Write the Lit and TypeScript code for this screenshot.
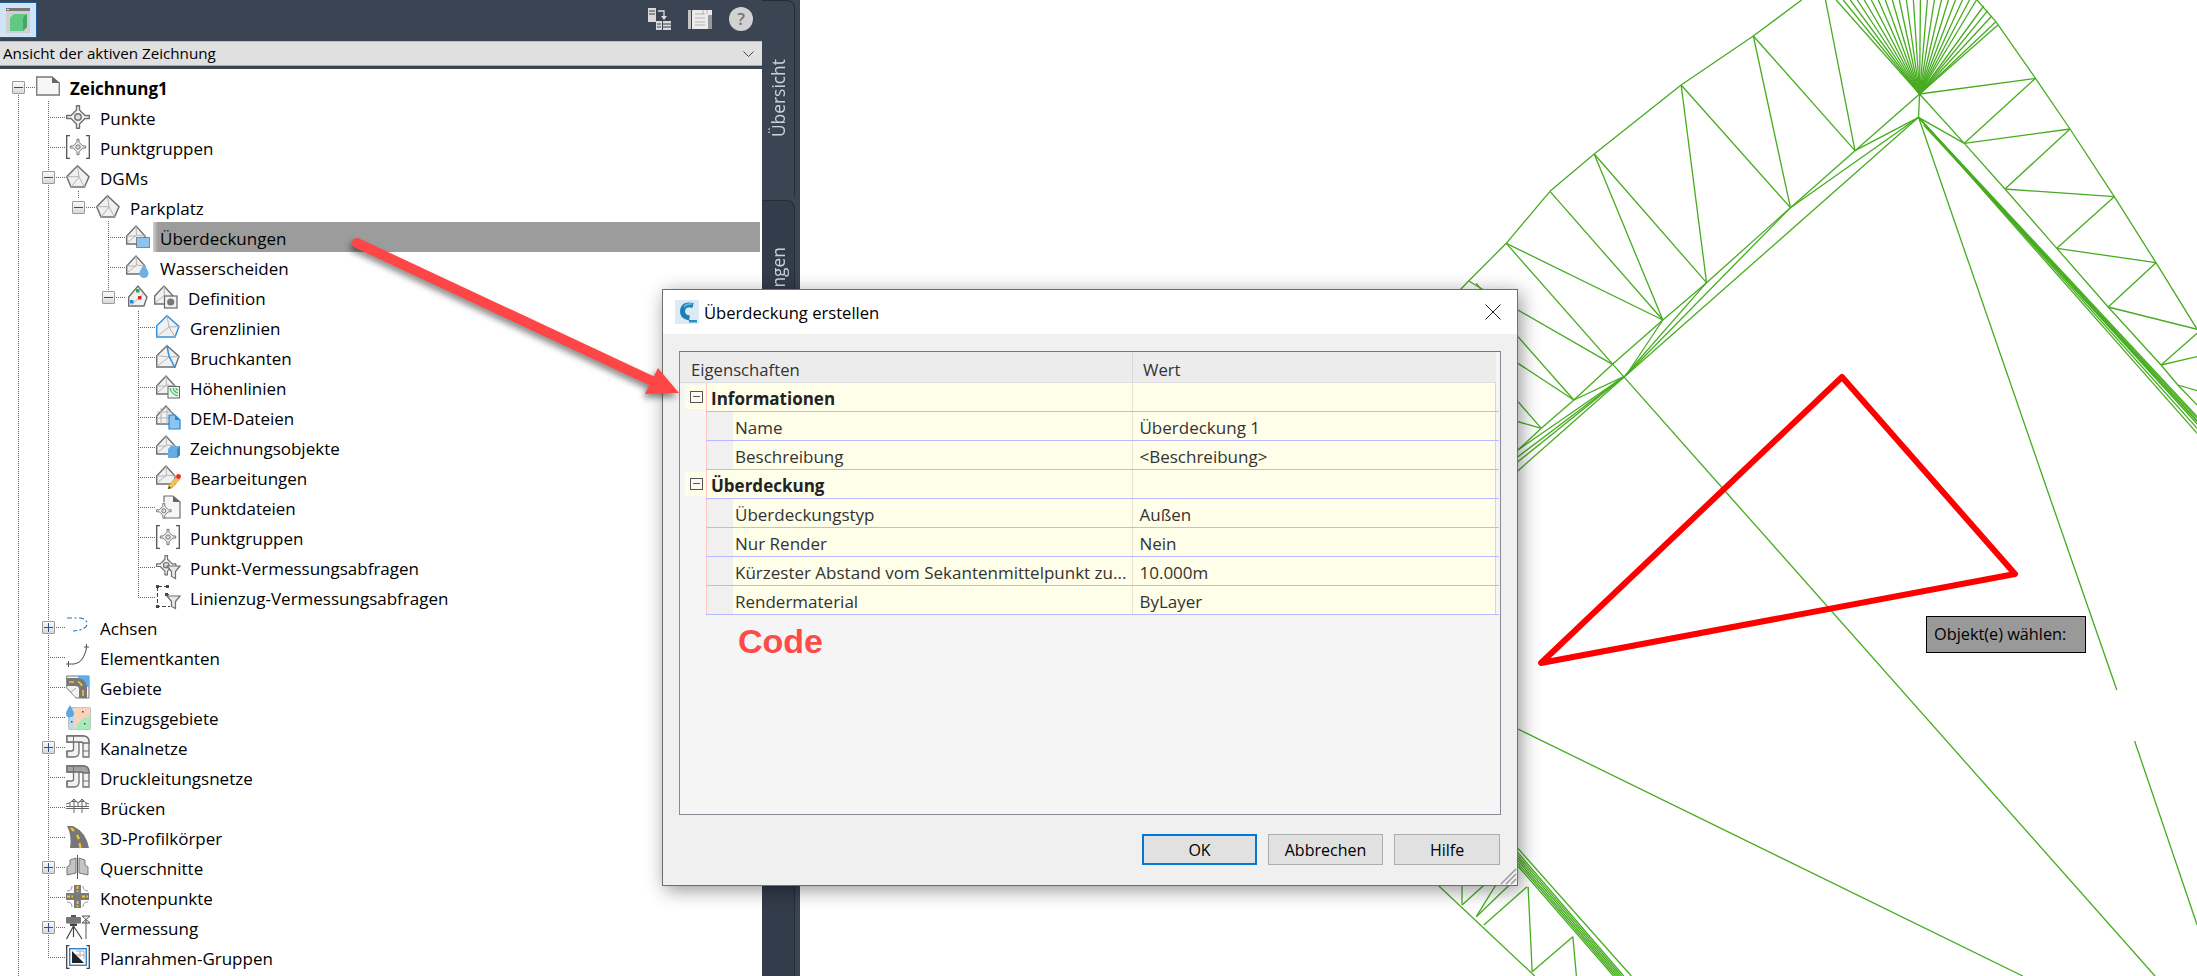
import { LitElement, html, css, svg } from "lit";
import { customElement } from "lit/decorators.js";

const G = "#6f6f6f";
const LT = "#b4b4b4";
const FILL = "#f1f1f1";

const surfFull = (stroke = G) => svg`
  <path d="M.7 10.7 11 .7 23 11.5 19 22H.7Z" fill="${FILL}" stroke="${stroke}" stroke-width="1.4"/>
  <path d="M11 1 13 12 19 22M.7 21.5 13 12 23 11.5M.7 10.7 13 12" fill="none" stroke="${LT}" stroke-width="1"/>`;
const surfPent = svg`
  <path d="M.7 11.7 11.5 .7 23 11.7 18.5 22H5Z" fill="#f0f0f0" stroke="${G}" stroke-width="1.5"/>
  <path d="M11.5 1 13 12 18.5 22M5 22 13 12M.7 11.7H13" fill="none" stroke="${LT}" stroke-width="1"/>`;
const surfSmall = svg`
  <path d="M.7 11 10 1 19 11V19H.7Z" fill="${FILL}" stroke="${G}" stroke-width="1.4"/>
  <path d="M10 1 10.5 10M1 18 10.5 10 19 11M1 11H10.5" fill="none" stroke="${LT}"/>`;
const funnel = svg`<path d="M11 11H24L19.5 16.5V23.5L15.5 21.5V16.5Z" fill="#e8e8e8" stroke="${G}" stroke-width="1.2"/>`;
const pointMark = (s = 1, dx = 0, dy = 0) => svg`
  <g transform="translate(${dx} ${dy}) scale(${s})">
    <path d="M10.5 .7H13.5V5L19 10.5H23.3V13.5H19L13.5 19V23.3H10.5V19L5 13.5H.7V10.5H5L10.5 5Z" fill="#f3f3f3" stroke="${G}" stroke-width="1.4" stroke-linejoin="round"/>
    <circle cx="12" cy="12" r="3.2" fill="#dcdcdc" stroke="${G}" stroke-width="1.4"/>
  </g>`;
const pipes = (top: string) => svg`
  <path d="M1 1H13V17Q13 22 8 22H1V16H5.5Q7.5 16 7.5 14V7H1Z" fill="${FILL}" stroke="${G}" stroke-width="1.3"/>
  <path d="M13 1H17Q23 1 23 7V22H17V8Q17 7 15 7H13Z" fill="${FILL}" stroke="${G}" stroke-width="1.3"/>
  <path d="M1 1H17Q23 1 23 7V8H17Q17 7 15 7H1Z" fill="${top}" stroke="${G}" stroke-width="1.3"/>
  <path d="M7.5 1V7M1 16V22M17 16H23" stroke="${G}" fill="none"/>`;

const ICONS: Record<string, unknown> = {
  doc: svg`<path d="M.7 2H16L23.3 8V20H.7Z" fill="#f6f6f6" stroke="#777" stroke-width="1.3"/><path d="M16 1.5 23.5 8H16Z" fill="#666"/>`,
  point: pointMark(),
  group: svg`<path d="M4 .7H.7V23.3H4M20 .7H23.3V23.3H20" fill="none" stroke="#555" stroke-width="1.3"/>${pointMark(0.68, 3.84, 3.84)}`,
  surf: surfPent,
  surfCover: svg`${surfSmall}<rect x="10.5" y="12.5" width="13" height="10" fill="#8ec3ee" stroke="#333" stroke-dasharray="1 1"/>`,
  surfWater: svg`${surfSmall}<path d="M18 9C20 13 22.5 15.5 22.5 18.5A4.5 4.5 0 0 1 13.5 18.5C13.5 15.5 16 13 18 9Z" fill="#6cb2e6"/>`,
  def: svg`
    <g transform="translate(2 0)">
      <path d="M.7 12 10 1 19 12 16 21H.7Z" fill="${FILL}" stroke="${G}" stroke-width="1.4"/>
      <path d="M2 21 15 9" stroke="${LT}"/>
      <rect x="8" y="4" width="3.5" height="3.5" fill="#23b14d"/>
      <rect x="10" y="11" width="3.5" height="3.5" fill="#d62828"/>
      <rect x="2" y="15" width="3.5" height="3.5" fill="#2a8fe0"/>
    </g>
    <g transform="translate(28 0)">
      <path d="M.7 11 10 1 19 11V19H.7Z" fill="${FILL}" stroke="${G}" stroke-width="1.4"/>
      <path d="M10 1 10.5 10M1 18 10.5 10" stroke="${LT}" fill="none"/>
      <rect x="10.5" y="11" width="12.5" height="12" fill="#f1f1f1" stroke="#666" stroke-width="1.2"/>
      <circle cx="16.7" cy="17" r="3.6" fill="#777"/>
    </g>`,
  grenz: svg`<path d="M.7 10.7 11 .7 23 11.5 19 22H.7Z" fill="${FILL}" stroke="#2f93e4" stroke-width="1.5"/><path d="M11 1 13 12 19 22M.7 21.5 13 12 23 11.5" fill="none" stroke="${LT}"/>`,
  bruch: svg`${surfFull()}<path d="M11 1 13 11 19 23" fill="none" stroke="#2f93e4" stroke-width="1.5"/>`,
  hoehen: svg`${surfSmall}<rect x="12" y="11.5" width="11.5" height="11.5" fill="#eef4ee" stroke="#666"/><path d="M14 13Q15 19 22 21M17 13Q18 17 22 18M20 13Q20 15 22 15" fill="none" stroke="#3dbb5c" stroke-width="1.2"/>`,
  dem: svg`<path d="M.7 11 10 1 19 11V19H.7Z" fill="${FILL}" stroke="${G}" stroke-width="1.4"/><path d="M1 7H16M1 13H19M5 3V19M11 2V19" stroke="${LT}" fill="none"/><path d="M13 10H19L24 15V24H13Z" fill="#8ec3ee" stroke="#1f88dc" stroke-width="1.2"/><path d="M19 10 24 15H19Z" fill="#1f88dc"/>`,
  obj: svg`${surfSmall}<path d="M12 14 15 11H24V20L21 23H12Z" fill="#66ade6"/><path d="M21 14 24 11V20L21 23Z" fill="#3a86c8"/>`,
  edit: svg`${surfSmall}<path d="M13 20 21 11 24 14 16 23 12 24Z" fill="#f3c14d" stroke="#b98a20" stroke-width=".5"/><circle cx="22.5" cy="11.5" r="2.4" fill="#ee2a2a"/><path d="M12 24 13 21 15 23Z" fill="#444"/>`,
  ptfile: svg`<path d="M8 7V1H17L24 7V23H8" fill="#f6f6f6" stroke="${G}" stroke-width="1.2"/><path d="M17 1 24 7H17Z" fill="#666"/>${pointMark(0.65, 0, 8)}`,
  ptquery: svg`${pointMark(0.85, 0, 0)}${funnel}`,
  lnquery: svg`<path d="M2 1.5H12M1.5 2V21.5H14M9 9.5H14" fill="none" stroke="#444" stroke-dasharray="4 2" stroke-width="1.1"/><path d="M0 0h3v3H0zM10 0h3v3h-3zM0 20h3v3H0zM9 8h3v3H9z" fill="#444"/>${funnel}`,
  achsen: svg`<path d="M1 3H15Q21 4 21 9.5Q20 15 7 16" fill="none" stroke="#2d6fb0" stroke-width="1.2" stroke-dasharray="5 2.5 2 2.5"/>`,
  kanten: svg`<path d="M5 19Q17 20 20.5 3" fill="none" stroke="#666" stroke-width="1.2"/><path d="M0 19H5M2.5 16V22M18 2H23M20.5 -1V4" stroke="#555" fill="none"/>`,
  gebiete: svg`<path d="M.7 1H23V23H10L.7 13Z" fill="#f3f3f3" stroke="#777"/><path d="M12 1H23V12H19Q18 5 12 6Z" fill="#62ace6"/><path d="M1 3V11H9Q13 11 13 14V23H21V13Q20 3 11 3Z" fill="#777"/><path d="M3 7H8M12 6.5Q15 8 16 11M17 15V21" stroke="#f4c52e" stroke-width="1.6" fill="none"/><path d="M1 14 9 22M5 17 10 13" stroke="#aaa" fill="none"/>`,
  einzugs: svg`<rect x="3" y="3" width="21" height="21" fill="#fff" stroke="#888"/><path d="M8 3H24V13Q13 13 9 24H3Z" fill="#fbd3b8"/><path d="M9 24Q13 13 24 11V24Z" fill="#a6ecb9"/><path d="M4 13H9L7 24H3Z" fill="#b7dcf5"/><path d="M4 0C6 4 8 6 8 8.5A4 4 0 0 1 0 8.5C0 6 2 4 4 0Z" fill="#5ba8e0"/><rect x="16" y="6" width="1.5" height="1.5" fill="#444"/><rect x="18" y="18" width="1.5" height="1.5" fill="#444"/><rect x="5" y="16" width="1.5" height="1.5" fill="#444"/>`,
  kanal: pipes(FILL),
  druck: pipes("#a3a3a3"),
  bruecke: svg`<path d="M0 11.5H23M0 13.5H23M8 4V18M16 4V18M0 9Q4 9 8 4Q12 11 16 4Q20 9 23 9M4 8V12M12 8V12M20 8V12M5 6.5H11M13 6.5H19" fill="none" stroke="#666"/>`,
  profil: svg`<path d="M1 1H7Q20 7 23 23H4Q6 10 1 1Z" fill="#777"/><path d="M5 3 8 6M11 10 13 14M13.5 18 14.5 23" stroke="#f6c92d" stroke-width="2.2" fill="none"/>`,
  quer: svg`<path d="M11.5 0V24" stroke="#555"/><path d="M10 3 4 5V10L1 12V20L10 18Z" fill="#c4c4c4" stroke="#777"/><path d="M13 3 19 5V10L22 12V20L13 18Z" fill="#c4c4c4" stroke="#777"/>`,
  knoten: svg`<path d="M8 0H15V8H23V15H15V23H8V15H0V8H8Z" fill="#7a7a7a"/><path d="M11.5 1V7M11.5 16V22M1 11.5H7M16 11.5H22" stroke="#f6c92d" stroke-width="1.8" stroke-dasharray="3 1.5"/><path d="M6 1Q6 6 1 6M17 1Q17 6 22 6M6 22Q6 17 1 17M17 22Q17 17 22 17" fill="none" stroke="#999"/>`,
  verm: svg`<rect x="0" y="2" width="15" height="6.5" rx="1" fill="#777"/><rect x="5" y="0" width="5" height="2" fill="#555"/><rect x="4" y="8.5" width="7" height="2.5" fill="#444"/><path d="M7.5 11 .5 24M7.5 11V22M7.5 11 16 24" stroke="#444" stroke-width="1.2" fill="none"/><path d="M20 5V24M16 1H24L16 8H24Z" fill="#f3f3f3" stroke="#555"/>`,
  plan: svg`<path d="M3.5 .7H.7V23.3H3.5M20.5 .7H23.3V23.3H20.5" fill="none" stroke="#444" stroke-width="1.3"/><rect x="3.7" y="3.7" width="16.6" height="16.6" fill="#fff" stroke="#2c82cc" stroke-width="1.4"/><path d="M6 6 18 18H6Z" fill="#222"/><path d="M10 6H18V14M14 6V12M10 10H18" stroke="#aaa" fill="none"/>`,
  cyl: svg`<ellipse cx="11" cy="10" rx="9" ry="4" fill="#eee" stroke="#777"/>`,
};

type Row = { l: number; t: string; i: string; e?: "-" | "+"; bold?: boolean; sel?: boolean; wide?: boolean };
const ROWS: Row[] = [
  { l: 0, t: "Zeichnung1", i: "doc", e: "-", bold: true },
  { l: 1, t: "Punkte", i: "point" },
  { l: 1, t: "Punktgruppen", i: "group" },
  { l: 1, t: "DGMs", i: "surf", e: "-" },
  { l: 2, t: "Parkplatz", i: "surf", e: "-" },
  { l: 3, t: "Überdeckungen", i: "surfCover", sel: true },
  { l: 3, t: "Wasserscheiden", i: "surfWater" },
  { l: 3, t: "Definition", i: "def", e: "-", wide: true },
  { l: 4, t: "Grenzlinien", i: "grenz" },
  { l: 4, t: "Bruchkanten", i: "bruch" },
  { l: 4, t: "Höhenlinien", i: "hoehen" },
  { l: 4, t: "DEM-Dateien", i: "dem" },
  { l: 4, t: "Zeichnungsobjekte", i: "obj" },
  { l: 4, t: "Bearbeitungen", i: "edit" },
  { l: 4, t: "Punktdateien", i: "ptfile" },
  { l: 4, t: "Punktgruppen", i: "group" },
  { l: 4, t: "Punkt-Vermessungsabfragen", i: "ptquery" },
  { l: 4, t: "Linienzug-Vermessungsabfragen", i: "lnquery" },
  { l: 1, t: "Achsen", i: "achsen", e: "+" },
  { l: 1, t: "Elementkanten", i: "kanten" },
  { l: 1, t: "Gebiete", i: "gebiete" },
  { l: 1, t: "Einzugsgebiete", i: "einzugs" },
  { l: 1, t: "Kanalnetze", i: "kanal", e: "+" },
  { l: 1, t: "Druckleitungsnetze", i: "druck" },
  { l: 1, t: "Brücken", i: "bruecke" },
  { l: 1, t: "3D-Profilkörper", i: "profil" },
  { l: 1, t: "Querschnitte", i: "quer", e: "+" },
  { l: 1, t: "Knotenpunkte", i: "knoten" },
  { l: 1, t: "Vermessung", i: "verm", e: "+" },
  { l: 1, t: "Planrahmen-Gruppen", i: "plan" },
  { l: 0, t: "", i: "cyl" },
];

/* tree connector coordinates, relative to the tree's top (page y - 69) */
const VLINES = [
  [18.5, 26, 907],
  [48.5, 32, 888],
  [78.5, 122, 130],
  [108.5, 152, 223],
  [138.5, 242, 528],
];

/* zoom-space helpers for the canvas triangulation */
const a = (X: number, Y: number): [number, number] => [1400 + X / 1.967, Y / 3];
const b = (X: number, Y: number): [number, number] => [1400 + X / 1.967, 500 + Y / 3];

const Q: [number, number] = [1022, 282];
const TOP: [number, number][] = [
  [790, 0], [695, 108], [553, 255], [382, 462], [295, 574], [209, 730], [135, 843], [118, 870],
];
const RIGHT: [number, number][] = [
  [1135, 0], [1172, 65], [1250, 235], [1318, 387], [1405, 590], [1487, 788], [1568, 988],
];
const ZIG: [number, number][] = [
  Q, [1110, 430], [1190, 567], [1292, 745], [1393, 921], [1497, 1095], [1530, 1155], [1568, 1215],
];
const RIDGE: [number, number][] = [
  Q, [895, 452], [768, 623], [603, 848], [517, 960], [418, 1093], [342, 1200], [278, 1285], [232, 1350],
];
type Seg = [number, number, number, number];
const SEGS6: Seg[] = [
  [1020, 352, 1022, 282],
  [1022, 282, 1250, 235], [1250, 235, 1110, 430], [1110, 430, 1318, 387], [1318, 387, 1190, 567],
  [1190, 567, 1405, 590], [1405, 590, 1292, 745], [1292, 745, 1487, 788], [1487, 788, 1393, 921],
  [1393, 921, 1568, 988], [1568, 1000, 1497, 1095], [1497, 1095, 1568, 1070], [1530, 1155, 1568, 1172],
  [1020, 352, 1110, 430],
  [1020, 352, 1568, 1300], [1020, 352, 1568, 1285], [1020, 352, 1568, 1272], [1020, 352, 1568, 1262],
  [1020, 352, 1568, 1250], [1030, 375, 1568, 1265], [1035, 380, 1568, 1255],
  [1020, 352, 1280, 1500],
  [1020, 352, 895, 452], [1020, 352, 768, 623], [1020, 352, 230, 1415],
  [768, 623, 445, 1125], [603, 848, 442, 1128], [517, 960, 445, 1125],
  [695, 108, 895, 452], [695, 108, 768, 623], [837, 0, 895, 452],
  [553, 255, 768, 623], [553, 255, 603, 848], [382, 462, 603, 848], [382, 462, 517, 960],
  [295, 574, 517, 960], [209, 730, 517, 960], [209, 730, 440, 1130], [440, 1130, 655, 1500],
  [232, 930, 418, 1093], [232, 1010, 342, 1200], [232, 1090, 342, 1200], [135, 843, 232, 930],
  [150, 850, 232, 1010], [232, 1205, 278, 1285], [232, 1265, 278, 1285],
  [342, 1200, 440, 1130], [232, 1370, 440, 1130], [232, 1350, 440, 1130], [232, 1385, 440, 1130],
];
const SEGS7: Seg[] = [
  [1280, 0, 1410, 570], [1445, 723, 1568, 1275],
  [655, 0, 1485, 1428], [232, 687, 1225, 1428],
  [232, 1045, 455, 1428], [232, 1058, 440, 1428], [232, 1066, 436, 1428], [232, 1074, 432, 1428],
  [232, 1082, 428, 1428], [232, 1090, 424, 1428], [232, 1098, 420, 1428],
  [75, 1156, 265, 1428], [122, 1156, 122, 1215], [165, 1156, 122, 1215], [188, 1156, 150, 1250],
  [232, 1130, 150, 1250], [250, 1160, 165, 1275], [252, 1160, 260, 1415], [340, 1310, 260, 1415], [340, 1310, 347, 1428],
];
const lines: number[][] = [];
const chain = (pts: [number, number][]) => {
  for (let i = 0; i < pts.length - 1; i++) lines.push([...a(...pts[i]), ...a(...pts[i + 1])]);
};
chain(TOP); chain(RIGHT); chain(ZIG); chain(RIDGE);
SEGS6.forEach((s) => lines.push([...a(s[0], s[1]), ...a(s[2], s[3])]));
SEGS7.forEach((s) => lines.push([...b(s[0], s[1]), ...b(s[2], s[3])]));
/* fan around the upper vertex */
for (let i = 0; i <= 20; i++) lines.push([...a(...Q), ...a(858 + i * 13.8, 0)]);
[[1148, 18], [1156, 32], [1164, 48], [1172, 65], [1176, 75]].forEach((p) => lines.push([...a(...Q), ...a(p[0], p[1])]));

const PROPS: { group?: boolean; name: string; value: string }[] = [
  { group: true, name: "Informationen", value: "" },
  { name: "Name", value: "Überdeckung 1" },
  { name: "Beschreibung", value: "<Beschreibung>" },
  { group: true, name: "Überdeckung", value: "" },
  { name: "Überdeckungstyp", value: "Außen" },
  { name: "Nur Render", value: "Nein" },
  { name: "Kürzester Abstand vom Sekantenmittelpunkt zu...", value: "10.000m" },
  { name: "Rendermaterial", value: "ByLayer" },
];

@customElement("app-root")
export class AppRoot extends LitElement {
  static styles = css`
    :host {
      display: flex;
      position: relative;
      width: 2197px;
      height: 976px;
      overflow: hidden;
      background: #fff;
      font-family: "Open Sans", "Noto Sans", sans-serif;
      font-size: 17px;
      color: #000;
    }
    .side { width: 800px; flex: none; display: flex; background: #3b4453; }
    .panel { width: 762px; flex: none; display: flex; flex-direction: column; }
    .toolbar { height: 41px; display: flex; align-items: flex-start; justify-content: space-between; }
    .appbtn {
      width: 36px; height: 34px; margin-top: 2px; background: #cfe4f6; box-sizing: content-box;
      border-right: 1px solid #1c5d9e; border-bottom: 1px solid #1c5d9e; border-top: 1px solid #1c5d9e;
      display: flex; align-items: center; justify-content: center;
    }
    .tools { display: flex; gap: 17px; padding: 7px 9px 0 0; align-items: flex-start; }
    .combo {
      height: 25px; background: #e0e0e0; border-top: 1px solid #bdbdbd; border-bottom: 1px solid #a8a8a8;
      box-sizing: border-box; display: flex; align-items: center; justify-content: space-between;
      padding: 0 8px 0 3px; margin-bottom: 3px; line-height: 23px; font-size: 15.2px;
    }
    .tree { flex: 1; background: #fff; position: relative; padding-top: 3px; overflow: hidden; }
    .guides { position: absolute; left: 0; top: 0; width: 762px; height: 907px; }
    .row { position: relative; height: 30px; display: flex; align-items: center; padding-right: 2px; box-sizing: border-box; }
    .exp { width: 36px; flex: none; display: flex; align-items: center; }
    .box {
      width: 13px; height: 13px; margin-left: 12px; box-sizing: border-box; position: relative;
      border: 1px solid #9a9a9a; border-radius: 1px; background: linear-gradient(#fafafa, #d9d9d9);
    }
    .box::before { content: ""; position: absolute; left: 1px; right: 1px; top: 5px; height: 1px; background: #2f4f92; }
    .box.plus::after { content: ""; position: absolute; top: 1px; bottom: 1px; left: 5px; width: 1px; background: #2f4f92; }
    .ico { width: 24px; height: 24px; flex: none; overflow: visible; }
    .ico.wide { width: 52px; }
    .label { flex: 1; margin-left: 3px; padding-left: 7px; height: 30px; line-height: 34px; white-space: nowrap; }
    .label.bold { font-weight: 700; }
    .label.sel { background: linear-gradient(90deg, #d0d0d0 0, #9c9c9c 5px); }
    .strip { flex: 1; display: flex; flex-direction: column; gap: 3px; padding-right: 5px; color: #c9d2de; }
    .tab {
      border-right: 1px solid #262d38; border-top: 1px solid #262d38; border-top-right-radius: 8px;
      display: flex; justify-content: center; box-sizing: border-box; font-size: 17.4px;
    }
    .tab.one { height: 197px; padding-top: 58px; }
    .tab.two { flex: 1; padding-top: 46px; background: #333c4a; }
    .vt { writing-mode: vertical-rl; transform: rotate(180deg); white-space: nowrap; height: max-content; }
    .canvas { flex: 1; min-width: 0; }
    .canvas svg { display: block; width: 100%; height: 100%; }
    .prompt {
      position: absolute; left: 1926px; top: 616px; width: 160px; height: 37px; box-sizing: border-box;
      background: #999; border: 1px solid #000; padding-left: 7px; line-height: 34px; white-space: nowrap; font-size: 16.3px;
    }
    .dialog {
      position: absolute; left: 662px; top: 289px; width: 856px; height: 597px; box-sizing: border-box;
      background: #f0f0f0; border: 1px solid #6e6e6e; box-shadow: 3px 4px 18px rgba(0, 0, 0, 0.42);
      display: flex; flex-direction: column;
    }
    .title { height: 44px; flex: none; background: #fff; display: flex; align-items: center; padding: 0 16px 0 12px; font-size: 16.6px; }
    .title .txt { margin-left: 5px; flex: 1; line-height: 28px; padding-top: 2px; }
    .frame {
      margin: 17px 16px 0; height: 464px; flex: none; box-sizing: border-box; background: #f5f5f5;
      border: 1px solid #8a8a96; border-top-color: #777; padding-right: 2px; color: #333; position: relative;
    }
    .head { height: 31px; background: #ececec; display: flex; margin-right: 2px; border-bottom: 1px solid #ddd; box-sizing: border-box; line-height: 35px; font-size: 16.7px; }
    .head .c1 { width: 453px; padding-left: 11px; box-sizing: border-box; border-right: 1px solid #d8d8d8; }
    .head .c2 { padding-left: 10px; }
    .prow { height: 29px; display: flex; box-sizing: border-box; }
    .gut { width: 26px; flex: none; padding-left: 5px; box-sizing: border-box; }
    .gutbox { height: 24px; margin-top: 2px; background: #fefee9; position: relative; }
    .minus { position: absolute; left: 5px; top: 6px; width: 13px; height: 12px; box-sizing: border-box; border: 1px solid #555; background: #fbfbf2; }
    .minus::before { content: ""; position: absolute; left: 2px; right: 2px; top: 4px; height: 1px; background: #555; }
    .pbody {
      flex: none; width: 793px; height: 29px; display: flex; box-sizing: border-box;
      border-bottom: 1px solid #b9b9ff; background: linear-gradient(90deg, #ffc4c4 0 1px, transparent 1px);
    }
    .indent { width: 26px; flex: none; margin-left: 1px; background: #f0f0f0; }
    .cell { background: #fefee9; box-sizing: border-box; white-space: nowrap; padding-top: 3px; line-height: 25px; height: 28px; }
    .cell.n { padding-left: 2px; border-right: 1px solid #e6e4cf; }
    .prow .n.prop { width: 401px; }
    .prow .n.grp { width: 427px; padding-left: 4px; margin-left: 1px; font-weight: 700; color: #222; }
    .cell.v { width: 363px; padding-left: 6px; box-shadow: inset -1px 0 0 #ffc4c4; margin-right: 3px; }
    .code {
      margin: 6px 0 0 58px; font: 700 34px/40px "Liberation Sans", sans-serif; color: #ff4a4a;
    }
    .btns { display: flex; justify-content: flex-end; gap: 11px; padding: 19px 17px 0 0; }
    .btn {
      width: 115px; height: 31px; box-sizing: border-box; background: #e1e1e1; border: 1px solid #adadad;
      display: flex; align-items: center; justify-content: center; line-height: 1; font-size: 16px;
    }
    .btn.ok { border: 2px solid #0078d7; }
    .btn.help { width: 106px; }
    .grip { position: absolute; right: 0; bottom: 0; width: 18px; height: 18px; }
    .overlay { position: absolute; left: 0; top: 0; width: 2197px; height: 976px; pointer-events: none; filter: drop-shadow(-2px 4px 3px rgba(0, 0, 0, 0.45)); }
  `;

  renderRow(r: Row) {
    return html`<div class="row" style="padding-left:${30 * r.l}px">
      <div class="exp">${r.e ? html`<div class="box ${r.e === "+" ? "plus" : ""}"></div>` : ""}</div>
      <svg class="ico ${r.wide ? "wide" : ""}" viewBox="0 0 ${r.wide ? 52 : 24} 24">${ICONS[r.i]}</svg>
      ${r.t
        ? html`<div class="label ${r.bold ? "bold" : ""} ${r.sel ? "sel" : ""}">${r.t}</div>`
        : html`<div class="label"></div>`}
    </div>`;
  }

  render() {
    const dots = "1 1";
    return html`
      <div class="side">
        <div class="panel">
          <div class="toolbar">
            <div class="appbtn">
              <svg width="24" height="25" viewBox="0 0 24 25">
                <rect width="24" height="25" fill="#cfcfcf"/>
                <rect x="0" y="0" width="24" height="3" fill="#777"/>
                <rect x="1" y="1" width="2" height="1" fill="#eee"/>
                <path d="M4 10 8 6H21V19L17 23H4Z" fill="#5fc885"/>
                <path d="M17 10 21 6V19L17 23Z" fill="#3ea866"/>
              </svg>
            </div>
            <div class="tools">
              <svg width="23" height="24" viewBox="0 0 23 24">
                <path d="M0 1H8V15H0Z" fill="#d9d9d9"/><path d="M1 4H7M1 7H7" stroke="#3b4453"/>
                <path d="M10 4H16V10" fill="none" stroke="#ddd" stroke-width="1.3"/><path d="M13 9H19L16 13Z" fill="#ddd"/>
                <path d="M8 14H14V23H8ZM15 14H23V23H15Z" fill="#d9d9d9"/><path d="M15 17H23M15 20H23M9 17H13M9 20H13" stroke="#3b4453"/>
              </svg>
              <svg width="24" height="24" viewBox="0 0 24 24" style="margin-top:2px">
                <path d="M0 1H3V20H0Z" fill="#c4c4c4"/><path d="M4 1H24V20H4Z" fill="#ececec"/>
                <path d="M20 6H24V20H20Z" fill="#9a9a9a"/><path d="M7 5H17M7 9H17M7 13H17M7 16H17M15 1V5M19 1V5" stroke="#b5b5b5"/>
              </svg>
              <svg width="24" height="24" viewBox="0 0 24 24">
                <circle cx="12" cy="12" r="12" fill="#d2d2d2"/>
                <text x="12" y="18" text-anchor="middle" font-family="Open Sans, sans-serif" font-size="17" font-weight="600" fill="#757575">?</text>
              </svg>
            </div>
          </div>
          <div class="combo">
            <span>Ansicht der aktiven Zeichnung</span>
            <svg width="11" height="6" viewBox="0 0 11 6"><path d="M.5.5 5.5 5.5 10.5.5" fill="none" stroke="#444"/></svg>
          </div>
          <div class="tree">
            <svg class="guides" viewBox="0 0 762 907">
              ${VLINES.map((v) => svg`<line x1="${v[0]}" x2="${v[0]}" y1="${v[1]}" y2="${v[2]}" stroke="#666" stroke-dasharray="${dots}"/>`)}
              ${ROWS.slice(0, 30).map((r, i) => {
                const x = 18 + 30 * r.l;
                const y = 18.5 + 30 * i;
                return svg`<line x1="${x}" x2="${x + 17}" y1="${y}" y2="${y}" stroke="#666" stroke-dasharray="${dots}"/>`;
              })}
            </svg>
            ${ROWS.map((r) => this.renderRow(r))}
          </div>
        </div>
        <div class="strip">
          <div class="tab one"><span class="vt">Übersicht</span></div>
          <div class="tab two"><span class="vt">Einstellungen</span></div>
        </div>
      </div>
      <div class="canvas">
        <svg viewBox="800 0 1397 976">
          ${lines.map((l) => svg`<line x1="${l[0]}" y1="${l[1]}" x2="${l[2]}" y2="${l[3]}" stroke="#46ac1f" stroke-width="1.3"/>`)}
          <path d="M1842 377 2015 574 1541 663Z" fill="none" stroke="#ff0000" stroke-width="6" stroke-linejoin="round"/>
        </svg>
      </div>
      <div class="prompt">Objekt(e) wählen:</div>
      <div class="dialog">
        <div class="title">
          <svg width="24" height="24" viewBox="0 0 24 24">
            <rect width="24" height="24" fill="#dceaf5"/>
            <path d="M18 5.5Q9 3 7.5 10.5 7 17 14.5 18" fill="none" stroke="#1d7fb8" stroke-width="5"/>
            <path d="M17 4Q11 3.5 9 7" fill="none" stroke="#5bbbe0" stroke-width="1.8"/>
            <rect x="14" y="20" width="8" height="2.5" fill="#2a8fc4"/>
          </svg>
          <span class="txt">Überdeckung erstellen</span>
          <svg width="16" height="16" viewBox="0 0 16 16"><path d="M.5.5 15.5 15.5M15.5.5.5 15.5" stroke="#222" fill="none"/></svg>
        </div>
        <div class="frame">
          <div class="head"><div class="c1">Eigenschaften</div><div class="c2">Wert</div></div>
          ${PROPS.map((p) => html`<div class="prow">
            <div class="gut">${p.group ? html`<div class="gutbox"><div class="minus"></div></div>` : ""}</div>
            <div class="pbody">
              ${p.group ? "" : html`<div class="indent"></div>`}
              <div class="cell n ${p.group ? "grp" : "prop"}">${p.name}</div>
              <div class="cell v">${p.value}</div>
            </div>
          </div>`)}
          <div class="code">Code</div>
        </div>
        <div class="btns">
          <div class="btn ok">OK</div>
          <div class="btn">Abbrechen</div>
          <div class="btn help">Hilfe</div>
        </div>
        <svg class="grip" viewBox="0 0 18 18"><path d="M17 2 2 17M17 7 7 17M17 12 12 17" stroke="#9a9a9a" stroke-width="1.5" fill="none"/></svg>
      </div>
      <svg class="overlay" viewBox="0 0 2197 976">
        <path d="M357 243 652 381" stroke="#ff4646" stroke-width="10" stroke-linecap="round" fill="none"/>
        <path d="M658 368 679 393 645 394Z" fill="#ff4646"/>
      </svg>
    `;
  }
}
